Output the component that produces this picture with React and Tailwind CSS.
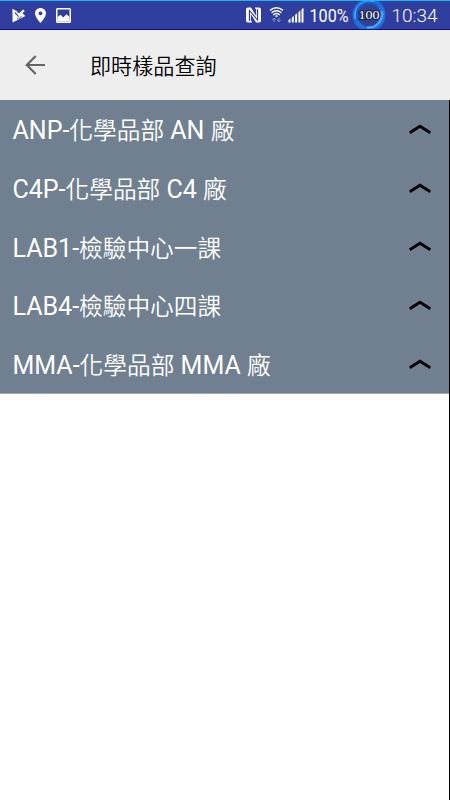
import React from 'react';

const departments = [
  ['ANP-', '化學品部', ' AN ', '廠'],
  ['C4P-', '化學品部', ' C4 ', '廠'],
  ['LAB1-', '檢驗中心一課'],
  ['LAB4-', '檢驗中心四課'],
  ['MMA-', '化學品部', ' MMA ', '廠'],
];

const StatusBar = () => (
  <div className="flex h-[30px] items-center border-t border-b border-t-[#20b4e4] border-b-[#0c0c8c] bg-[#303f9f] pl-3 pr-[12px] text-white">
    {/* Notifications */}
    <svg className="h-[15px] w-[14px]" viewBox="0 0 14 15">
      <path d="M.4 .8 L5 3.2 L5.8 5 L8 4.8 L9 4 L13.4 8 L.6 14.4 Z" fill="#fff" />
      <path d="M2.8 4.6 L6.4 8 L12 2.4" fill="none" stroke="#303f9f" strokeWidth="1.3" />
      <path d="M5 9.9 L6.6 10.8 L9.6 8.4" fill="none" stroke="#303f9f" strokeWidth=".9" />
      <path d="M4.4 4.9 L6.4 6.4 L11 1.6 L12.8 3 L7 8.6" fill="#fff" />
    </svg>
    <svg className="ml-[9px] h-[15px] w-[11px]" viewBox="0 0 14 20" preserveAspectRatio="none">
      <path
        d="M7 0C3.13 0 0 3.13 0 7c0 5.25 7 13 7 13s7-7.75 7-13c0-3.87-3.13-7-7-7zm0 9.5a2.5 2.5 0 1 1 0-5 2.5 2.5 0 0 1 0 5z"
        fill="#fff"
      />
    </svg>
    <svg className="ml-2.5 h-[15px] w-[15px]" viewBox="0 0 15 15">
      <rect x=".75" y=".75" width="13.5" height="13.5" rx=".8" fill="none" stroke="#fff" strokeWidth="1.5" />
      <path d="M1.5 9 L4.5 6.7 L7.2 9.5 L10.5 6.2 L13.5 9 V13.5 H1.5 Z" fill="#fff" />
    </svg>

    {/* Connection and battery */}
    <svg className="ml-auto h-[16px] w-[15px]" viewBox="0 0 15 16">
      <path d="M2 .5 H5 L10.2 9 V3 L8.8 .5 H13 Q15 .5 15 2.5 V13.5 Q15 15.5 13 15.5 H10 L4.8 7 V13 L6.2 15.5 H2 Q0 15.5 0 13.5 V2.5 Q0 .5 2 .5 Z" fill="#fff" />
      <path d="M3.4 14 V3.4 L11.6 13 V2" fill="none" stroke="#303f9f" strokeWidth="1.1" />
    </svg>
    <svg className="ml-2 h-[16px] w-[15px]" viewBox="0 0 15 16" fill="none" stroke="#fff">
      <path d="M1 3.4 Q7.5 -1.8 14 3.4" strokeWidth="1.4" />
      <path d="M2.6 5.8 Q7.5 1.7 12.4 5.8" strokeWidth="1.4" />
      <path d="M4.2 8 Q7.5 5.1 10.8 8" strokeWidth="1.4" />
      <path d="M6 8.8 Q7.5 7.8 9 8.8 L7.5 10.4 Z" fill="#fff" stroke="none" />
      <path d="M5 15 V11.2 M3.3 13 L5 11.2 L6.7 13 M9.8 11 V14.8 M8.1 13 L9.8 14.8 L11.5 13" stroke="#8f98cf" />
    </svg>
    <svg className="ml-[4px] h-[16px] w-[16px]" viewBox="0 0 16 16" fill="#fff">
      <path d="M.5 15.5 V13 L2.5 11.5 V15.5 Z M3.8 15.5 V10.5 L5.8 8.9 V15.5 Z M7.1 15.5 V7.8 L9.1 6.2 V15.5 Z M10.4 15.5 V5.2 L12.4 3.6 V15.5 Z M13.5 15.5 V2.4 L15.5 .8 V15.5 Z" />
    </svg>
    <svg className="ml-[4px] h-[28px] w-[43px] overflow-visible" viewBox="0 0 43 28">
      <text x="1.5" y="21" textLength="39" lengthAdjust="spacingAndGlyphs" fill="#fff" className="font-['Roboto',sans-serif] text-[18.6px]">100%</text>
    </svg>
    <svg className="ml-px h-[28px] w-[34px] overflow-hidden" viewBox="0 0 34 28">
      <circle cx="17" cy="14" r="14" fill="none" stroke="#1d70dc" strokeWidth="5" />
      <path d="M3.5 18 A14 14 0 0 1 22 1.5" fill="none" stroke="#48a5f5" strokeWidth="2" />
      <path d="M30 10 A14 14 0 0 1 15 26.5" fill="none" stroke="#48a5f5" strokeWidth="2.5" />
      <path d="M6 19 A12 12 0 0 1 26 6" fill="none" stroke="#1558d8" strokeWidth="2" />
      <circle cx="17" cy="14" r="11" fill="#31438f" />
      <text x="6.5" y="18" textLength="21" lengthAdjust="spacingAndGlyphs" fill="#fff" stroke="#18204a" strokeWidth="2" paintOrder="stroke" className="font-['Liberation_Serif',serif] text-[12.5px]">100</text>
    </svg>
    <svg className="ml-[4px] h-[28px] w-[48px] overflow-visible" viewBox="0 0 48 28">
      <text x="1.5" y="21" textLength="46" lengthAdjust="spacingAndGlyphs" fill="#fff" className="font-['Roboto',sans-serif] text-[19.2px] font-light">10:34</text>
    </svg>
  </div>
);

const Header = () => (
  <header className="flex h-[70px] items-center bg-[#eeeeee] pl-[25px]">
    <button aria-label="back">
      <svg className="block h-5 w-5" viewBox="0 0 20 20" fill="none" stroke="#656565" strokeWidth="2.2">
        <path d="M20 10 H2 M10.7 .9 L1.8 10 L10.7 19.1" />
      </svg>
    </button>
    <h1 className="ml-[45px] pt-1 text-[21.1px] leading-none font-[350] text-black">即時樣品查詢</h1>
  </header>
);

const App = () => {
  return (
    <div className="flex h-[800px] w-[450px] flex-col overflow-hidden bg-white font-['Roboto','Noto_Sans_CJK_TC',sans-serif]">
      <StatusBar />
      <Header />
      <main className="flex-1 border-r border-black">
        <ul className="border-b border-[#a0abb6] bg-[#708090]">
          {departments.map((parts) => (
            <li key={parts[0]} className="flex h-[58.6px] items-center justify-between pl-[12.5px] pr-[18px] text-white">
              <span className="pt-[4px] text-[25px] leading-none whitespace-pre">
                {parts.map((part, i) => (
                  <span key={i} className={i % 2 ? 'text-[23.7px] font-[350]' : ''}>{part}</span>
                ))}
              </span>
              <svg className="h-[10px] w-[22px]" viewBox="0 0 22 10" fill="none" stroke="#000" strokeWidth="2.8">
                <path d="M.7 8.7 L11 2.2 L21.3 8.7" />
              </svg>
            </li>
          ))}
        </ul>
      </main>
    </div>
  );
};

export default App;
